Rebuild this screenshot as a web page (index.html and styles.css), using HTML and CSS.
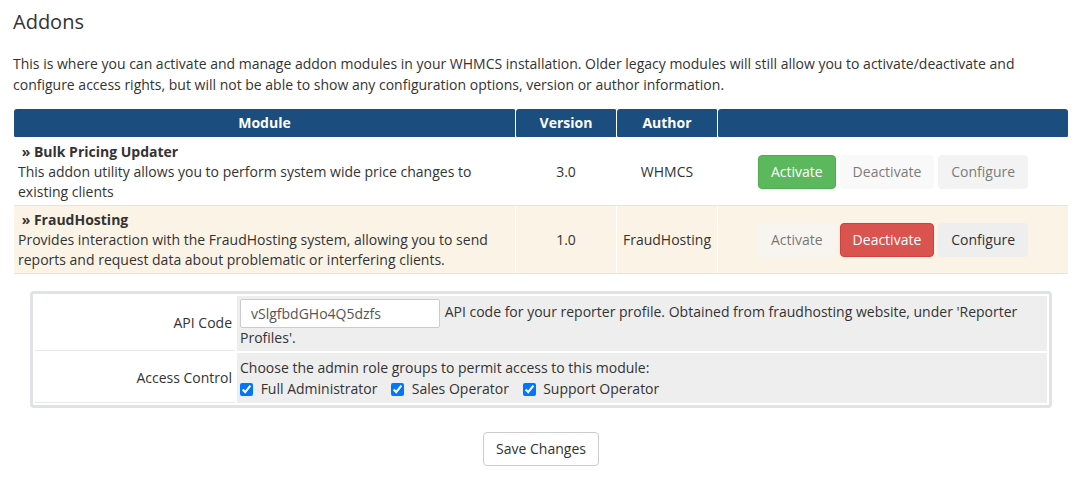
FILE: index.html
```html
<!DOCTYPE html>
<html lang="en">
<head>
<meta charset="utf-8">
<title>Addons</title>
<link rel="stylesheet" href="styles.css">
</head>
<body>
<div class="page">
  <h1 class="title">Addons</h1>
  <p class="intro">This is where you can activate and manage addon modules in your WHMCS installation. Older legacy modules will still allow you to activate/deactivate and configure access rights, but will not be able to show any configuration options, version or author information.</p>

  <table class="addons">
    <thead>
      <tr>
        <th class="col-module">Module</th>
        <th class="col-version">Version</th>
        <th class="col-author">Author</th>
        <th class="col-actions"></th>
      </tr>
    </thead>
    <tbody>
      <tr>
        <td class="module"><strong>&nbsp;» Bulk Pricing Updater</strong><br>This addon utility allows you to perform system wide price changes to existing clients</td>
        <td class="center">3.0</td>
        <td class="center">WHMCS</td>
        <td class="center actions">
          <button class="btn btn-success">Activate</button>
          <button class="btn btn-danger" disabled>Deactivate</button>
          <button class="btn btn-default" disabled>Configure</button>
        </td>
      </tr>
      <tr class="active-row">
        <td class="module"><strong>&nbsp;» FraudHosting</strong><br>Provides interaction with the FraudHosting system, allowing you to send reports and request data about problematic or interfering clients.</td>
        <td class="center">1.0</td>
        <td class="center">FraudHosting</td>
        <td class="center actions">
          <button class="btn btn-success" disabled>Activate</button>
          <button class="btn btn-danger">Deactivate</button>
          <button class="btn btn-default">Configure</button>
        </td>
      </tr>
    </tbody>
  </table>

  <div class="config-box">
    <table class="config">
      <tr>
        <td class="label">API Code</td>
        <td class="value"><input class="text-input" type="text" value="vSlgfbdGHo4Q5dzfs"> API code for your reporter profile. Obtained from fraudhosting website, under 'Reporter Profiles'.</td>
      </tr>
      <tr>
        <td class="label">Access Control</td>
        <td class="value access">Choose the admin role groups to permit access to this module:<br>
          <label class="check"><input type="checkbox" checked> Full Administrator</label>
          <label class="check"><input type="checkbox" checked> Sales Operator</label>
          <label class="check"><input type="checkbox" checked> Support Operator</label>
        </td>
      </tr>
    </table>
  </div>

  <div class="save-row">
    <button class="btn btn-save">Save Changes</button>
  </div>
</div>
</body>
</html>
```

FILE: styles.css
```css
html, body {
  margin: 0;
  padding: 0;
  background: #fff;
}

body {
  font-family: "Open Sans", "Liberation Sans", sans-serif;
  font-size: 14px;
  line-height: 20px;
  color: #333;
}

.page {
  padding: 0 8px 0 14px;
}

.title {
  font-size: 20px;
  font-weight: normal;
  line-height: 22px;
  margin: 11px 0 0 -1px;
  color: #333;
}

.intro {
  margin: 20px 0 0 -1px;
  line-height: 21px;
}

.addons {
  width: 1054px;
  margin-top: 14px;
  border-collapse: collapse;
}

.addons th {
  background: #1b4d7f;
  color: #fff;
  font-weight: bold;
  height: 28px;
  padding: 0 5px;
  border: 1px solid #fff;
  border-top: 0;
  border-radius: 3px;
  text-align: center;
}

.addons th:first-child { border-left: 0; }
.addons th:last-child { border-right: 0; }

.col-module { width: 491px; }
.col-version { width: 90px; }
.col-author { width: 90px; }

.addons td {
  padding: 4px 5px 3px;
  border-left: 1px solid #fff;
  border-right: 1px solid #fff;
  border-top: 1px solid #e4e4e4;
  border-bottom: 1px solid #e4e4e4;
  vertical-align: middle;
}

.addons tbody tr:first-child td { border-top: 1px solid #fff; }
.addons td:first-child { border-left: 0; }
.addons td:last-child { border-right: 0; }

.addons td.module {
  padding-left: 4px;
  padding-right: 12px;
}

.active-row td {
  background: #fcf3e7;
}

.center { text-align: center; }

.actions {
  font-size: 0;
  white-space: nowrap;
}

.btn {
  font-family: "Open Sans", "Liberation Sans", sans-serif;
  font-size: 14px;
  line-height: 20px;
  padding: 6px 12px;
  border: 1px solid transparent;
  border-radius: 4px;
  cursor: pointer;
  margin: 0 2px;
  vertical-align: middle;
}

.btn[disabled] {
  opacity: 0.65;
  cursor: default;
}

.btn-success {
  background: #5cb85c;
  border-color: #4cae4c;
  color: #fff;
}

.btn-success[disabled] {
  background: #f7f7f7;
  border-color: #f7f7f7;
  color: #333;
}

.btn-danger {
  background: #d9534f;
  border-color: #d43f3a;
  color: #fff;
}

.btn-danger[disabled] {
  background: #f7f7f7;
  border-color: #f7f7f7;
  color: #333;
}

.btn-default {
  background: #eee;
  border-color: #eee;
  color: #333;
}

.config-box {
  margin: 17px 16px 0 16px;
  border: 3px solid #dfe3e7;
  border-radius: 4px;
}

.config {
  width: 100%;
  border-collapse: separate;
  border-spacing: 2px;
}

.config td {
  padding: 3px;
  vertical-align: middle;
}

.config td.label {
  width: 194px;
  text-align: right;
  background: #fff;
  border-bottom: 1px solid #e8e8e8;
}

.config td.value {
  background: #eee;
}

.config td.access {
  padding: 4px 3px 4px;
  line-height: 21px;
}

.text-input {
  font-family: "Open Sans", "Liberation Sans", sans-serif;
  font-size: 14px;
  color: #555;
  width: 178px;
  height: 17px;
  padding: 5px 10px;
  border: 1px solid #ccc;
  border-radius: 2px;
  background: #fff;
  vertical-align: middle;
  margin: 0 1px 0 0;
}

.check {
  margin-right: 10px;
  white-space: nowrap;
}

.check input {
  margin: 3px 4px 3px 0;
  vertical-align: -2px;
}

.save-row {
  text-align: center;
  margin-top: 24px;
}

.btn-save {
  background: #fff;
  border-color: #ccc;
  color: #333;
  padding: 6px 12px;
}
```
